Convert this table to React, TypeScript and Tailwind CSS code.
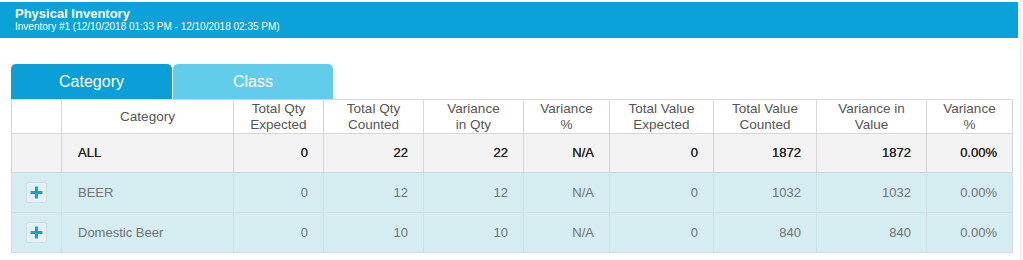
const cols = [50, 172, 90, 100, 100, 86, 104, 103, 110, 86]

const headers = [
  '',
  'Category',
  'Total Qty\nExpected',
  'Total Qty\nCounted',
  'Variance\nin Qty',
  'Variance\n%',
  'Total Value\nExpected',
  'Total Value\nCounted',
  'Variance in\nValue',
  'Variance\n%',
]

const rows = [
  { name: 'BEER', vals: ['0', '12', '12', 'N/A', '0', '1032', '1032', '0.00%'] },
  { name: 'Domestic Beer', vals: ['0', '10', '10', 'N/A', '0', '840', '840', '0.00%'] },
]

function PlusButton() {
  return (
    <div className="mx-auto flex h-[21px] w-[21px] items-center justify-center rounded-[2px] border border-[#c9dfe5] bg-[#e4f2f6]">
      <svg width="13" height="13" viewBox="0 0 13 13">
        <rect x="5" y="0.5" width="3" height="12" fill="#1a9dd5" />
        <rect x="0.5" y="5" width="12" height="3" fill="#1a9dd5" />
      </svg>
    </div>
  )
}

export default function App() {
  return (
    <div className="flex h-[260px] w-[1023px] bg-white font-['Liberation_Sans',Arial,sans-serif]">
      <div className="w-[1018px] pt-[2px]">
        <div className="h-[36px] bg-[#0aa2d9] pl-[15px] pt-[5px] text-white">
          <div className="text-[13px] font-bold leading-[14px]">Physical Inventory</div>
          <div className="text-[10px] leading-[12px]">Inventory #1 (12/10/2018 01:33 PM - 12/10/2018 02:35 PM)</div>
        </div>

        <div className="ml-[11px] mt-[26px] flex">
          <div className="flex h-[35px] w-[161px] items-center justify-center rounded-t-[5px] bg-[#0a9fd6] text-[16px] text-white">
            Category
          </div>
          <div className="ml-px flex h-[35px] w-[160px] items-center justify-center rounded-t-[5px] bg-[#62cdeb] text-[16px] text-white">
            Class
          </div>
        </div>

        <table className="ml-[11px] table-fixed border-collapse text-[13px]">
          <colgroup>
            {cols.map((w, i) => (
              <col key={i} style={{ width: w }} />
            ))}
          </colgroup>
          <thead>
            <tr className="h-[34px] bg-white text-[#555]">
              {headers.map((h, i) => (
                <th key={i} className="whitespace-pre-line border border-[#d6d6d6] px-1 text-center text-[13.5px] font-normal leading-[16px]">
                  {h}
                </th>
              ))}
            </tr>
          </thead>
          <tbody>
            <tr className="h-[39px] bg-[#f3f3f3] text-[#222]">
              <td className="border border-[#d6d6d6]" />
              <td className="border border-[#d6d6d6] pl-[16px] [text-shadow:0_0_0.4px_#222]">ALL</td>
              {['0', '22', '22', 'N/A', '0', '1872', '1872', '0.00%'].map((v, i) => (
                <td key={i} className="border border-[#d6d6d6] pr-[15px] text-right [text-shadow:0_0_0.4px_#222]">
                  {v}
                </td>
              ))}
            </tr>
            {rows.map((r) => (
              <tr key={r.name} className="h-[40px] bg-[#d5ecf1] text-[#6f7478]">
                <td className="border border-[#cfdfe3]">
                  <PlusButton />
                </td>
                <td className="border border-[#cfdfe3] pl-[16px]">{r.name}</td>
                {r.vals.map((v, i) => (
                  <td key={i} className="border border-[#cfdfe3] pr-[15px] text-right">
                    {v}
                  </td>
                ))}
              </tr>
            ))}
          </tbody>
        </table>
      </div>
      <div className="ml-[2px] w-[2px] bg-[#eef2f4]" />
    </div>
  )
}
